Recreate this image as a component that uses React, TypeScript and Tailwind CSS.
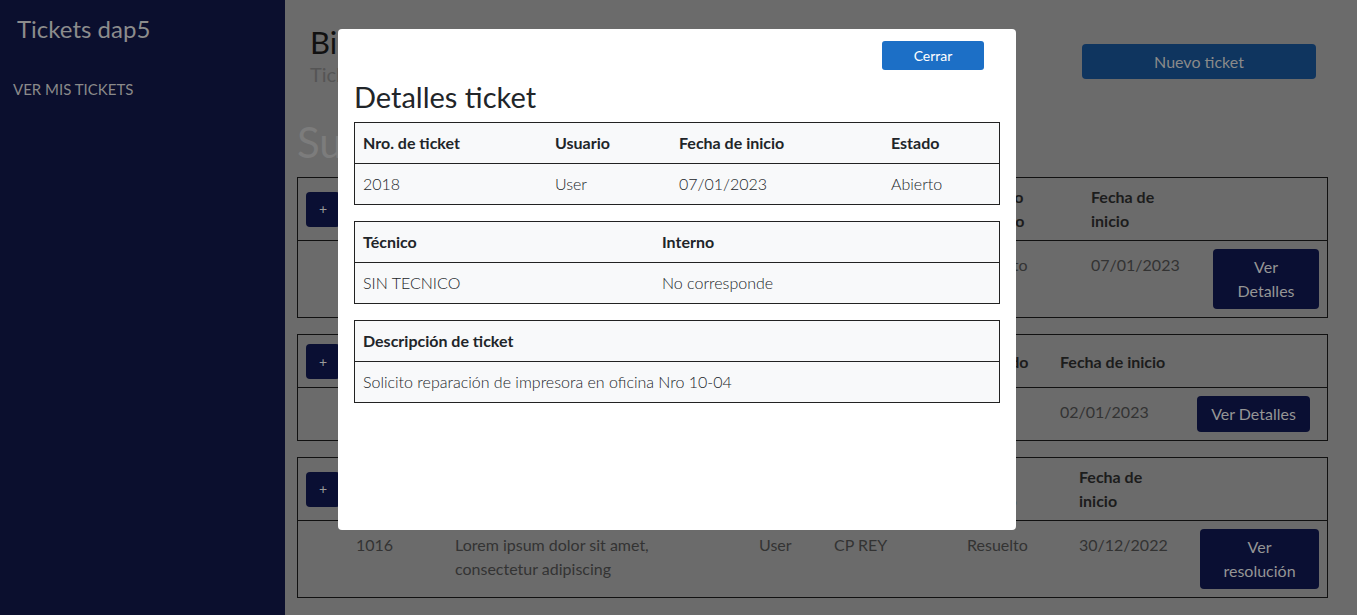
export default function App() {
  return (
    <div className="relative flex h-[615px] w-full overflow-hidden bg-[#6b6b6b] font-['Lato',sans-serif]">
      {/* Sidebar */}
      <aside className="w-[285px] shrink-0 bg-[#0b0f2e]">
        <h1 className="ml-[17px] mt-[14px] text-[24px] leading-[30px] text-[#8c8c8c]">Tickets dap5</h1>
        <a className="ml-[13px] mt-[35px] block text-[15px] leading-[20px] text-[#8a8a8a]">VER MIS TICKETS</a>
      </aside>

      {/* Main (behind backdrop) */}
      <main className="flex-1 pl-[12px] pr-[29px]">
        <div className="flex items-start justify-between pl-[13px] pr-[12px] pt-[24px]">
          <div>
            <h2 className="text-[31px] leading-[36px] text-[#111]">Bienvenido CP Rey</h2>
            <p className="mt-[2px] text-[20px] leading-[24px] text-[#555]">Tickets del usuario</p>
          </div>
          <button className="mt-[20px] h-[35px] w-[234px] rounded-[4px] bg-[#0f355f] text-[16px] text-[#8a8a8a]">Nuevo ticket</button>
        </div>
        <h3 className="mt-[31px] text-[42px] leading-[50px] text-[#7c7c7c]">Sus tickets</h3>

        <div className="mt-[10px] flex flex-col gap-[16px]">
          <BgTable
            cols="grid-cols-[50px_99px_304px_75px_141px_116px_1fr]"
            headTwoLine
            num="2018"
            desc="Solicito reparación de impresora en oficina Nro 10-04"
            tecnico="SIN TECNICO"
            estado="Abierto"
            fecha="07/01/2023"
            action={["Ver", "Detalles"]}
            btn="w-[106px]"
          />
          <BgTable
            cols="grid-cols-[50px_99px_304px_75px_146px_80px_1fr]"
            num="2010"
            desc="Lorem ipsum dolor sit amet"
            tecnico="CP REY"
            estado=""
            fecha="02/01/2023"
            action={["Ver Detalles"]}
            btn="w-[113px] mr-[9px]"
          />
          <BgTable
            cols="grid-cols-[50px_99px_304px_75px_133px_112px_1fr]"
            headTwoLine
            num="1016"
            desc="Lorem ipsum dolor sit amet, consectetur adipiscing"
            tecnico="CP REY"
            estado="Resuelto"
            fecha="30/12/2022"
            action={["Ver", "resolución"]}
            btn="w-[119px]"
          />
        </div>
      </main>

      {/* Modal */}
      <div className="absolute left-[338px] top-[29px] h-[501px] w-[678px] rounded-[4px] bg-white px-[16px] text-[#212529]">
        <div className="flex justify-end pr-[16px] pt-[12px]">
          <button className="h-[29px] w-[102px] rounded-[3px] bg-[#1c6fc6] text-[14px] text-white">Cerrar</button>
        </div>
        <h4 className="mt-[10px] text-[29px] leading-[34px]">Detalles ticket</h4>
        <div className="mt-[8px] flex flex-col gap-[16px]">
          <DetailTable cols="grid-cols-[192px_124px_212px_1fr]" head={["Nro. de ticket", "Usuario", "Fecha de inicio", "Estado"]} body={["2018", "User", "07/01/2023", "Abierto"]} />
          <DetailTable cols="grid-cols-[299px_1fr]" head={["Técnico", "Interno"]} body={["SIN TECNICO", "No corresponde"]} />
          <DetailTable cols="grid-cols-1" head={["Descripción de ticket"]} body={["Solicito reparación de impresora en oficina Nro 10-04"]} />
        </div>
      </div>
    </div>
  );
}

function DetailTable({ cols, head, body }: { cols: string; head: string[]; body: string[] }) {
  return (
    <div className="border border-[#222] bg-[#f8f9fa] text-[16px]">
      <div className={`grid ${cols} h-[41px] items-center border-b border-[#222] px-[8px] font-bold`}>
        {head.map((h) => (
          <span key={h}>{h}</span>
        ))}
      </div>
      <div className={`grid ${cols} h-[40px] items-center px-[8px] font-light`}>
        {body.map((b) => (
          <span key={b}>{b}</span>
        ))}
      </div>
    </div>
  );
}

function BgTable({
  cols,
  headTwoLine,
  num,
  desc,
  tecnico,
  estado,
  fecha,
  action,
  btn,
}: {
  cols: string;
  headTwoLine?: boolean;
  num: string;
  desc: string;
  tecnico: string;
  estado: string;
  fecha: string;
  action: string[];
  btn: string;
}) {
  return (
    <div className="border border-[#111] text-[16px] leading-[24px]">
      <div className={`grid ${cols} items-center border-b border-[#111] pl-[8px] font-bold text-[#1c1c1c] ${headTwoLine ? "pt-[7px] pb-[7px]" : "pt-[9px] pb-[8px]"}`}>
        <button className="h-[35px] w-[34px] rounded-[4px] bg-[#0a0f33] text-[14px] font-normal text-[#9a9a9a]">+</button>
        <span>Nro.</span>
        <span>Descripción</span>
        <span>Usuario</span>
        <span>Técnico</span>
        <span>{headTwoLine ? <>Estado<br />Pedido</> : "Estado"}</span>
        <span>{headTwoLine ? <>Fecha de<br />inicio</> : "Fecha de inicio"}</span>
      </div>
      <div className={`grid ${cols} items-start px-[8px] py-[8px] text-[#333]`}>
        <span />
        <span className="pt-[4px]">{num}</span>
        <span className="pt-[4px] pr-[40px]">{desc}</span>
        <span className="pt-[4px]">User</span>
        <span className="pt-[4px]">{tecnico}</span>
        <span className="pt-[4px]">{estado}</span>
        <div className="flex items-start justify-between">
          <span className="pt-[4px]">{fecha}</span>
          <button className={`${btn} rounded-[4px] bg-[#0a0f33] py-[6px] text-[16px] leading-[24px] text-[#959595]`}>
            {action.map((a) => (
              <span key={a} className="block">{a}</span>
            ))}
          </button>
        </div>
      </div>
    </div>
  );
}
